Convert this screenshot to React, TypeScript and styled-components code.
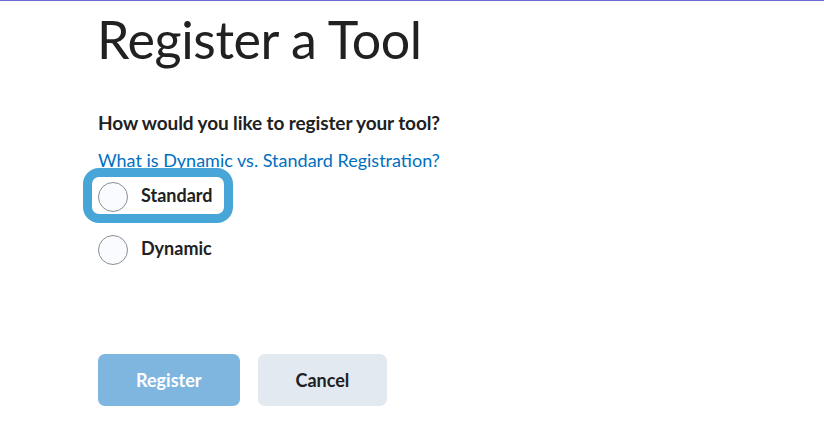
import React from 'react';
import styled, { createGlobalStyle } from 'styled-components';

const GlobalStyle = createGlobalStyle`
  html, body {
    margin: 0;
    padding: 0;
    background: #ffffff;
    font-family: Lato, "Noto Sans", sans-serif;
    color: #202122;
  }
`;

type RadioOption = {
  label: string;
  focused?: boolean;
};

const options: RadioOption[] = [
  { label: 'Standard', focused: true },
  { label: 'Dynamic' },
];

const App: React.FC = () => (
  <>
    <GlobalStyle />
    <TopEdge />
    <Page>
      <Title>Register a Tool</Title>
      <Question>How would you like to register your tool?</Question>
      <HelpLink href="#">What is Dynamic vs. Standard Registration?</HelpLink>
      <RadioGroup>
        {options.map(({ label, focused }) => (
          <RadioRow key={label} $focused={focused}>
            <RadioCircle />
            <RadioLabel>{label}</RadioLabel>
          </RadioRow>
        ))}
      </RadioGroup>
      <Actions>
        <Button $primary disabled>
          Register
        </Button>
        <Button>Cancel</Button>
      </Actions>
    </Page>
  </>
);

const TopEdge = styled.div`
  height: 4px;
  border-top: 1px solid #6b6bd6;
  background: #fafafc;
`;

const Page = styled.div`
  display: flex;
  flex-direction: column;
  align-items: flex-start;
  padding: 0 0 0 98px;
`;

const Title = styled.h1`
  margin: 4px 0 0 -1px;
  font-size: 52px;
  font-weight: 400;
  line-height: 60px;
  letter-spacing: -0.4px;
`;

const Question = styled.div`
  margin-top: 43px;
  font-size: 19px;
  font-weight: 700;
  line-height: 22px;
  letter-spacing: -0.1px;
`;

const HelpLink = styled.a`
  margin-top: 15px;
  font-size: 18px;
  line-height: 22px;
  color: #006fbf;
  text-decoration: none;
`;

const RadioGroup = styled.div`
  display: flex;
  flex-direction: column;
  gap: 23px;
  margin-top: 11px;
`;

const RadioRow = styled.label<{ $focused?: boolean }>`
  display: flex;
  align-items: center;
  gap: 13px;
  height: 30px;
  position: relative;

  &::before {
    content: '';
    display: ${({ $focused }) => ($focused ? 'block' : 'none')};
    position: absolute;
    left: -15px;
    top: -14px;
    right: -20px;
    bottom: -11px;
    border: 9px solid #48a5d8;
    border-radius: 16px;
  }
`;

const RadioCircle = styled.span`
  width: 28px;
  height: 28px;
  border-radius: 50%;
  border: 1px solid #8a8d92;
  background: #f9fbff;
  flex-shrink: 0;
`;

const RadioLabel = styled.span`
  font-size: 18px;
  font-weight: 700;
  line-height: 22px;
  margin-top: -5px;
`;

const Actions = styled.div`
  display: flex;
  gap: 18px;
  margin-top: 89px;
`;

const Button = styled.button<{ $primary?: boolean }>`
  height: 52px;
  padding: 0 38px;
  border: none;
  border-radius: 7px;
  font-family: Lato, "Noto Sans", sans-serif;
  font-size: 18px;
  font-weight: 700;
  background: ${({ $primary }) => ($primary ? '#7fb6df' : '#e3e9f1')};
  color: ${({ $primary }) => ($primary ? '#ffffff' : '#202122')};
  min-width: ${({ $primary }) => ($primary ? '141px' : '129px')};
  cursor: pointer;

  &:disabled {
    cursor: default;
  }
`;

export default App;
